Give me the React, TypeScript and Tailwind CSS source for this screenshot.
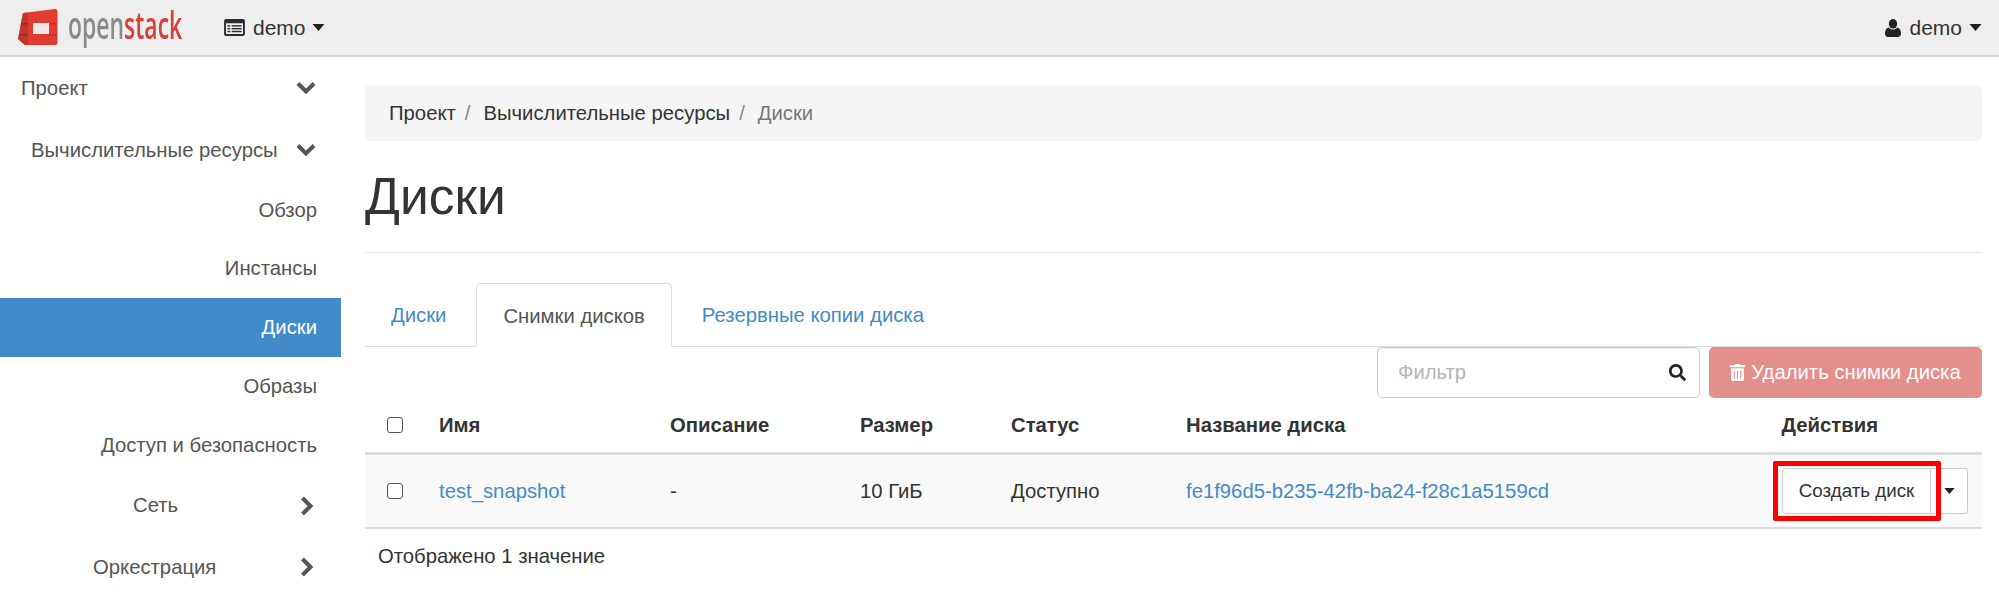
import React from 'react';
import { FaSearch, FaTrashAlt } from 'react-icons/fa';

const sideLeaf = ['Обзор'];

const ChevronDown = () => (
  <svg viewBox="0 0 20 14" className="w-[20px] h-[14px]" fill="none" stroke="#555" strokeWidth="4">
    <polyline points="2,2.500 10,10.500 18,2.500" />
  </svg>
);

const ChevronRight = () => (
  <svg viewBox="0 0 14 20" className="w-[14px] h-[20px]" fill="none" stroke="#555" strokeWidth="4">
    <polyline points="2.500,2 10.500,10 2.500,18" />
  </svg>
);

const Caret = ({ small }: { small?: boolean }) => (
  <svg viewBox="0 0 12 7" className={small ? 'w-[11px] h-[6px]' : 'w-[13px] h-[7px]'} fill="#222">
    <path d="M0 0h12L6 7z" />
  </svg>
);

const UserIcon = () => (
  <svg viewBox="0 0 16 18" className="w-[16px] h-[18px]" fill="#222">
    <ellipse cx="8" cy="4.800" rx="4.200" ry="4.800" />
    <path d="M3.800 8.500C5 10 6.400 10.500 8 10.500s3-.5 4.200-2C14.800 9 16 11 16 14.500 16 16.700 14.700 18 13 18H3c-1.700 0-3-1.300-3-3.500C0 11 1.200 9 3.800 8.500z" />
  </svg>
);

const ProjectIcon = () => (
  <svg viewBox="0 0 22 18" className="w-[21px] h-[17px]" fill="#2b2b2b">
    <path fillRule="evenodd" d="M2 0h18a2 2 0 0 1 2 2v14a2 2 0 0 1-2 2H2a2 2 0 0 1-2-2V2a2 2 0 0 1 2-2zm0 4.500v11a.5.5 0 0 0 .5.5h17a.5.5 0 0 0 .5-.5v-11z" />
    <rect x="3.500" y="6.500" width="3" height="1.500" />
    <rect x="3.500" y="9.500" width="3" height="1.500" />
    <rect x="3.500" y="12.500" width="3" height="1.500" />
    <rect x="8" y="6.500" width="10.500" height="1.500" />
    <rect x="8" y="9.500" width="10.500" height="1.500" />
    <rect x="8" y="12.500" width="10.500" height="1.500" />
  </svg>
);

const Logo = () => (
  <div className="flex items-center w-[224px] pl-[18px]">
    <svg viewBox="0 0 40 37" className="w-[40px] h-[37px] shrink-0 blur-[0.4px]">
      <path d="M5 4 L37 0 Q39.500 0 39.500 3 L39.500 33 Q39.500 36 37 36 L7 36 L0 30 Z" fill="#e03c2f" />
      <path d="M5 4 L10 3.500 L10 36 L7 36 L0 30 Z" fill="#c2362b" />
      <rect x="15" y="14" width="16" height="11" fill="#efe9e8" />
      <rect x="3" y="14" width="7" height="1.500" fill="#8a2c24" />
      <rect x="2" y="25" width="8" height="1.500" fill="#8a2c24" />
      <rect x="31" y="14" width="8" height="1.500" fill="#b9372c" />
      <rect x="31" y="25" width="8" height="1.500" fill="#b9372c" />
    </svg>
    <span className="ml-[10px] text-[37px] font-semibold leading-none origin-left scale-x-[0.62] font-['Open_Sans',sans-serif] blur-[0.5px] -translate-y-[3px] whitespace-nowrap">
      <span className="text-[#8a8a8a]">open</span>
      <span className="text-[#d5403a]">stack</span>
    </span>
  </div>
);

const Checkbox = () => (
  <input type="checkbox" className="appearance-none block w-[16px] h-[16px] rounded-[3px] border-[1.500px] border-[#555] bg-white" />
);

const columns = 'grid grid-cols-[74px_231px_190px_151px_175px_1fr] items-center';

export default function App() {
  return (
    <div className="w-[1999px] h-[597px] overflow-hidden bg-white text-[#333] text-[20.300px] font-['Liberation_Sans',Arial,sans-serif]">
      <header className="h-[57px] bg-[#eeeeee] border-b-2 border-[#d5d5d5] flex items-center justify-between pr-[17px]">
        <div className="flex items-center">
          <Logo />
          <div className="flex items-center text-[21px]">
            <ProjectIcon />
            <span className="ml-[8px]">demo</span>
            <span className="ml-[6px]"><Caret /></span>
          </div>
        </div>
        <div className="flex items-center text-[21px]">
          <UserIcon />
          <span className="ml-[8px]">demo</span>
          <span className="ml-[7px]"><Caret /></span>
        </div>
      </header>

      <div className="flex">
        <aside className="w-[341px] shrink-0 text-[#555]">
          <div className="h-[62px] flex items-center justify-between pl-[21px] pr-[25px]">
            <span>Проект</span>
            <ChevronDown />
          </div>
          <div className="h-[62px] flex items-center justify-between pl-[31px] pr-[25px]">
            <span>Вычислительные ресурсы</span>
            <ChevronDown />
          </div>
          {sideLeaf.map(label => (
            <div key={label} className="h-[58px] flex items-center justify-end pr-[24px]">{label}</div>
          ))}
          <div className="h-[59px] flex items-center justify-end pr-[24px]">Инстансы</div>
          <div className="h-[59px] flex items-center justify-end pr-[24px] bg-[#428bca] text-white">Диски</div>
          <div className="h-[59px] flex items-center justify-end pr-[24px]">Образы</div>
          <div className="h-[59px] flex items-center justify-end pr-[24px]">Доступ и безопасность</div>
          <div className="h-[61px] flex items-center justify-between pl-[133px] pr-[27px]">
            <span>Сеть</span>
            <ChevronRight />
          </div>
          <div className="h-[62px] flex items-center justify-between pl-[93px] pr-[27px]">
            <span>Оркестрация</span>
            <ChevronRight />
          </div>
        </aside>

        <main className="flex-1 pl-[24px] pr-[17px] pt-[28px]">
          <div className="h-[56px] rounded-[5px] bg-[#f5f5f5] flex items-center pl-[24px]">
            <span>Проект</span>
            <span className="pl-[9px] pr-[13px] text-[#888]">/</span>
            <span>Вычислительные ресурсы</span>
            <span className="pl-[9px] pr-[13px] text-[#888]">/</span>
            <span className="text-[#777]">Диски</span>
          </div>

          <h1 className="mt-[28px] h-[84px] text-[51.500px] leading-[54px] border-b border-[#e5e5e5]">Диски</h1>

          <div className="mt-[30px] h-[64px] flex items-end border-b border-[#ddd]">
            <div className="h-[63px] pl-[26px] pr-[28px] pt-[2px] flex items-center text-[#428bca]">Диски</div>
            <div className="h-[64px] -mb-px ml-[2px] px-[26px] pt-[2px] flex items-center text-[#555] bg-white border border-[#ddd] border-b-white rounded-t-[5px]">Снимки дисков</div>
            <div className="h-[63px] ml-[2px] px-[28px] pt-[2px] flex items-center text-[#428bca]">Резервные копии диска</div>
          </div>

          <div className="flex justify-end gap-[9px] h-[51px]">
            <div className="w-[323px] h-[51px] flex items-center justify-between pl-[20px] pr-[13px] rounded-[5px] border border-[#ccc] shadow-[inset_0_1px_1px_rgba(0,0,0,0.075)]">
              <span className="text-[#b5b5b5]">Фильтр</span>
              <FaSearch className="w-[17px] h-[17px] text-[#222]" />
            </div>
            <div className="w-[273px] h-[51px] flex items-center justify-center rounded-[5px] bg-[#e58f8c] text-white">
              <FaTrashAlt className="w-[15px] h-[17px] mr-[6px]" />
              Удалить снимки диска
            </div>
          </div>

          <div className={`${columns} h-[57px] border-b-[3px] border-[#ddd] font-bold`}>
            <div className="pl-[22px]"><Checkbox /></div>
            <div>Имя</div>
            <div>Описание</div>
            <div>Размер</div>
            <div>Статус</div>
            <div className="flex justify-between pr-[104px]">
              <span>Название диска</span>
              <span>Действия</span>
            </div>
          </div>

          <div className={`${columns} h-[74px] border-b-2 border-[#ddd] bg-[#f9f9f9]`}>
            <div className="pl-[22px]"><Checkbox /></div>
            <div className="text-[#428bca]">test_snapshot</div>
            <div>-</div>
            <div>10 ГиБ</div>
            <div>Доступно</div>
            <div className="flex items-center justify-between pr-[14px]">
              <span className="text-[#428bca]">fe1f96d5-b235-42fb-ba24-f28c1a5159cd</span>
              <div className="relative flex h-[46px] text-[18.800px]">
                <div className="w-[149px] flex items-center justify-center bg-white border border-[#ccc] rounded-l-[4px]">Создать диск</div>
                <div className="w-[37px] flex items-center justify-center bg-white border border-l-0 border-[#ccc] rounded-r-[4px]">
                  <Caret small />
                </div>
                <div className="absolute -left-[9px] -top-[7px] w-[168px] h-[60px] border-[5px] border-[#ff0000] rounded-[2px]" />
              </div>
            </div>
          </div>

          <div className="pl-[13px] pt-[12px]">Отображено 1 значение</div>
        </main>
      </div>
    </div>
  );
}
